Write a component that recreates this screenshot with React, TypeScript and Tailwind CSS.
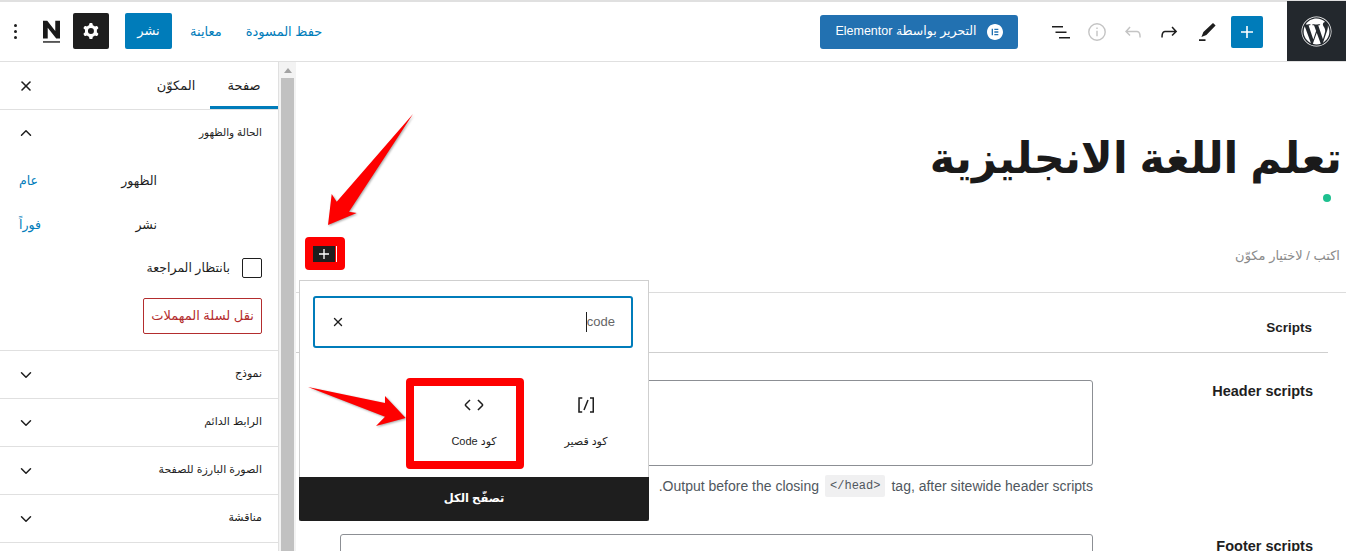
import { ChevronDown, ChevronUp, X } from 'lucide-react';
import { FaWordpress } from 'react-icons/fa';
import { SiElementor } from 'react-icons/si';

const panels = ['نموذج', 'الرابط الدائم', 'الصورة البارزة للصفحة', 'مناقشة'];

function Glyph({ d, className }: { d: string; className?: string }) {
  return (
    <svg viewBox="0 0 24 24" fill="currentColor" fillRule="evenodd" className={className}>
      <path d={d} />
    </svg>
  );
}

const plus = 'M18 11.2h-5.2V6h-1.6v5.2H6v1.6h5.2V18h1.6v-5.2H18z';
const undo =
  'M18.3 11.7c-.6-.6-1.4-.9-2.3-.9H6.7l2.9-3.3-1.1-1-4.5 5L8.5 16l1-1-2.7-2.7H16c.5 0 .9.2 1.3.5 1 1 1 3.4 1 4.5v.3h1.5v-.2c0-1.5 0-4.3-1.5-5.7z';
const redo =
  'M15.6 6.5l-1.1 1 2.9 3.3H8c-.9 0-1.7.3-2.3.9-1.4 1.5-1.4 4.2-1.4 5.6v.2h1.5v-.3c0-1.1 0-3.5 1-4.5.3-.3.7-.5 1.3-.5h9.2L14.5 15l1.1 1.1 4.6-4.6-4.6-5z';
const cog =
  'M10.289 4.836A1 1 0 0111.275 4h1.306a1 1 0 01.987.836l.244 1.466c.787.26 1.503.679 2.108 1.218l1.393-.522a1 1 0 011.216.437l.653 1.13a1 1 0 01-.23 1.273l-1.148.944a6.025 6.025 0 010 2.435l1.149.946a1 1 0 01.23 1.272l-.653 1.13a1 1 0 01-1.216.437l-1.394-.522c-.605.54-1.32.958-2.108 1.218l-.244 1.466a1 1 0 01-.987.836h-1.306a1 1 0 01-.986-.836l-.244-1.466a5.995 5.995 0 01-2.108-1.218l-1.394.522a1 1 0 01-1.217-.436l-.653-1.131a1 1 0 01.23-1.272l1.149-.946a6.026 6.026 0 010-2.435l-1.148-.944a1 1 0 01-.23-1.272l.653-1.131a1 1 0 011.217-.437l1.393.522a5.994 5.994 0 012.108-1.218l.244-1.466zM14.929 12a3 3 0 11-6 0 3 3 0 016 0z';
const listView = 'M3 6h11v1.5H3V6zm3.5 5.5h11V13h-11v-1.5zM21 17H10v1.5h11V17z';
const code =
  'M20.8 10.7l-4.3-4.3-1.1 1.1 4.3 4.3c.1.1.1.3 0 .4l-4.3 4.3 1.1 1.1 4.3-4.3c.7-.8.7-1.9 0-2.6zM4.2 11.8l4.3-4.3-1-1-4.3 4.3c-.7.7-.7 1.8 0 2.5l4.3 4.3 1.1-1.1-4.3-4.3c-.2-.1-.2-.3-.1-.4z';
const shortcode =
  'M16 4.2v1.5h2.5v12.5H16v1.5h4V4.2h-4zM4.2 19.8h4v-1.5H5.8V5.8h2.5V4.2h-4l-.1 15.6zm5.1-3.1l1.4.6 4-10-1.4-.6-4 10z';

function Header() {
  return (
    <header className="flex h-[62px] items-center border-t-2 border-b border-[#e0e0e0] bg-white">
      {/* left group */}
      <div className="flex items-center">
        <div className="ml-[14px] flex w-[3px] flex-col gap-[3px]">
          <span className="h-[3px] w-[3px] rounded-full bg-[#1e1e1e]" />
          <span className="h-[3px] w-[3px] rounded-full bg-[#1e1e1e]" />
          <span className="h-[3px] w-[3px] rounded-full bg-[#1e1e1e]" />
        </div>
        <svg viewBox="0 0 18 24" className="ml-[26px] h-[24px] w-[17px] text-[#1a1a1a]" fill="currentColor">
          <path d="M0 0h4.5l8.5 11V0h5v19h-4L5 7.5V19H0z" />
          <rect y="21.5" width="18" height="2" fill="#555" />
        </svg>
        <button className="-mt-px ml-[13px] flex h-9 w-9 items-center justify-center rounded-[2px] bg-[#1e1e1e] text-white">
          <Glyph d={cog} className="h-6 w-6" />
        </button>
        <button className="-mt-px ml-4 h-9 w-[47px] rounded-[2px] bg-[#007cba] text-[13px] text-white">نشر</button>
        <span className="ml-[18px] text-[13px] text-[#007cba]">معاينة</span>
        <span className="ml-6 text-[13px] text-[#007cba]">حفظ المسودة</span>
      </div>

      {/* right group */}
      <div className="ml-auto flex items-center self-stretch">
        <button
          dir="rtl"
          className="flex h-[34px] w-[198px] items-center justify-center gap-[10px] rounded-[3px] bg-[#2271b1] text-[12.5px] font-medium text-white"
        >
          <SiElementor className="h-4 w-4" />
          <span>التحرير بواسطة Elementor</span>
        </button>
        <Glyph d={listView} className="ml-[31px] h-6 w-6 text-[#1e1e1e]" />
        <svg viewBox="0 0 24 24" className="ml-3 h-6 w-6 text-[#c4c4c4]" fill="none" stroke="currentColor" strokeWidth="1.4">
          <circle cx="12" cy="12" r="8.2" />
          <path d="M12 10.8v5.4M12 7.4v1.7" />
        </svg>
        <Glyph d={undo} className="ml-3 h-6 w-6 text-[#c4c4c4]" />
        <Glyph d={redo} className="ml-3 h-6 w-6 text-[#1e1e1e]" />
        <svg viewBox="0 0 24 24" className="ml-[13px] h-6 w-6 text-[#1e1e1e]" fill="currentColor">
          <path d="M19 3l2.6 2.5-9.2 9.6-5 2 2-5.1zM5 19.2h6.5v1.7H5z" />
        </svg>
        <button className="ml-[13px] flex h-8 w-8 items-center justify-center rounded-[2px] bg-[#007cba] text-white">
          <Glyph d={plus} className="h-6 w-6" />
        </button>
        <div className="-mt-px ml-6 flex w-[59px] items-center justify-center self-stretch bg-[#23282d] text-white">
          <FaWordpress className="h-[31px] w-[31px]" />
        </div>
      </div>
    </header>
  );
}

function Sidebar() {
  return (
    <aside className="w-[279px] shrink-0 border-r border-[#e0e0e0] bg-white" dir="rtl">
      <div className="flex h-[48px] items-stretch border-b border-[#e0e0e0] text-[13px] text-[#1e1e1e]">
        <div className="flex w-[68px] items-center justify-center border-b-[3px] border-[#007cba] pt-[3px]">صفحة</div>
        <div className="flex w-[68px] items-center justify-center">المكوّن</div>
        <div className="mr-auto flex items-center pl-[18px]">
          <X className="h-4 w-4" strokeWidth={2.4} />
        </div>
      </div>

      <section className="h-[241px] border-b border-[#e0e0e0] px-4">
        <div className="flex h-[46px] items-center justify-between text-[10.5px] text-[#1e1e1e]">
          <span>الحالة والظهور</span>
          <ChevronUp className="ml-px h-[18px] w-[18px]" strokeWidth={2} />
        </div>
        <div className="mt-[3px] flex h-[44px] items-center text-[12.5px] text-[#1e1e1e]">
          <span className="mr-[105px] w-[60px] shrink-0">الظهور</span>
          <span className="mr-auto ml-[3px] text-[#007cba]">عام</span>
        </div>
        <div className="flex h-[44px] items-center text-[12.5px] text-[#1e1e1e]">
          <span className="mr-[105px] w-[60px] shrink-0">نشر</span>
          <span className="mr-auto ml-[3px] text-[#007cba]">فوراً</span>
        </div>
        <label className="mt-[11px] flex items-center text-[12.5px] text-[#1e1e1e]">
          <span className="h-5 w-5 rounded-[2px] border border-[#1e1e1e]" />
          <span className="mr-3">بانتظار المراجعة</span>
        </label>
        <button className="mt-5 h-[36px] w-[119px] rounded-[2px] border border-[#b32d2e] text-[13px] text-[#b32d2e]">
          نقل لسلة المهملات
        </button>
      </section>

      {panels.map((title) => (
        <div key={title} className="flex h-[48px] items-center justify-between border-b border-[#e0e0e0] px-4 text-[11px] text-[#1e1e1e]">
          <span className="-mt-[2px]">{title}</span>
          <ChevronDown className="mt-px ml-px h-[18px] w-[18px]" strokeWidth={2} />
        </div>
      ))}
    </aside>
  );
}

function Scrollbar() {
  return (
    <div className="flex w-[17px] shrink-0 flex-col items-center bg-[#f3f3f3]">
      <span className="mt-[6px] h-0 w-0 border-x-[4px] border-b-[5px] border-x-transparent border-b-[#a3a3a3]" />
      <div className="mt-[5px] w-[13px] flex-1 bg-[#c1c1c1]" />
    </div>
  );
}

function Editor() {
  return (
    <main className="min-w-0 flex-1 bg-white">
      <div dir="rtl" className="h-[230px] pr-[6px]">
        <h1 className="-mr-[2px] pt-[66px] text-[43px] leading-[60px] font-bold text-[#1a1a1a]">تعلم اللغة الانجليزية</h1>
        <span className="mt-[6px] mr-[9px] block h-2 w-2 rounded-full bg-[#1ec08f]" />
        <p className="mt-[44px] text-[13px] leading-5 text-[#8a8a8a]">اكتب / لاختيار مكوّن</p>
      </div>
      <div className="border-t border-[#dcdcdc]">
        <div className="mr-[18px] flex h-[60px] justify-end border-b border-[#cfcfcf] pt-[25px] pr-4 text-[13.5px] font-bold text-[#1e1e1e]">
          Scripts
        </div>
        <div className="flex pr-[33px] pl-[44px]">
          <div className="flex-1">
            <div className="mt-[27px] h-[86px] rounded-[3px] border border-[#8c8f94]" />
            <p className="mt-[10px] flex h-5 items-center justify-end text-[14px] whitespace-nowrap text-[#50575e]">
              .Output before the closing
              <code className="mx-[6px] rounded-[2px] bg-[#f0f0f1] px-[5px] py-[2px] font-['Liberation_Mono',monospace] text-[12px]">&lt;/head&gt;</code>
              tag, after sitewide header scripts
            </p>
            <div className="mt-[38px] h-[85px] rounded-[3px] border border-[#8c8f94]" />
          </div>
          <div className="w-[220px] text-right text-[14.5px] font-bold text-[#1e1e1e]">
            <div className="mt-[28px]">Header scripts</div>
            <div className="mt-[133px]">Footer scripts</div>
          </div>
        </div>
      </div>
    </main>
  );
}

function Inserter() {
  return (
    <div className="absolute top-[280px] left-[299px] z-10 flex h-[241px] w-[350px] flex-col border border-b-0 border-[#cfcfcf] bg-white">
      <div className="mt-[15px] mr-[15px] ml-[13px] flex h-[52px] items-center justify-between rounded-[3px] border-2 border-[#007cba] px-4">
        <X className="h-[14px] w-[14px] text-[#1e1e1e]" strokeWidth={2.4} />
        <span className="border-l border-[#1e1e1e] text-[13px] leading-5 text-[#666666]">code</span>
      </div>
      <div className="flex flex-1 justify-end pr-[12px]">
        <div className="mt-[45px] mr-[11px] flex w-[102px] flex-col items-center text-[11px] text-[#1e1e1e]">
          <Glyph d={code} className="h-6 w-6" />
          <span className="mt-[16px]" dir="rtl">كود Code</span>
        </div>
        <div className="mt-[45px] flex w-[100px] flex-col items-center text-[11px] text-[#1e1e1e]">
          <Glyph d={shortcode} className="h-6 w-6" />
          <span className="mt-[16px]" dir="rtl">كود قصير</span>
        </div>
      </div>
      <button className="-mx-px h-[44px] rounded-b-[2px] bg-[#1e1e1e] text-[11.5px] font-bold text-white">تصفّح الكل</button>
    </div>
  );
}

export default function App() {
  return (
    <div className="relative h-[551px] overflow-hidden bg-white font-['Liberation_Sans','DejaVu_Sans',sans-serif]">
      <Header />
      <div className="flex h-[489px]">
        <Sidebar />
        <Scrollbar />
        <Editor />
      </div>

      {/* block appender, marked up in red */}
      <div className="absolute top-[237px] left-[305px] z-10 flex h-[33px] w-[40px] items-center rounded-[4px] bg-[#fe0000] pl-[8px]">
        <span className="flex h-4 w-[22px] items-center justify-center bg-[#1e1e1e] text-white">
          <Glyph d={plus} className="h-5 w-5" />
        </span>
        <span className="ml-[1px] h-4 w-px bg-white" />
      </div>

      <Inserter />

      {/* annotation box around the Code block */}
      <div className="absolute top-[378px] left-[406px] z-20 h-[91px] w-[118px] rounded-[4px] border-[8px] border-[#fe0000]" />

      {/* annotation arrows */}
      <svg className="absolute top-[105px] left-[320px] z-20 h-[130px] w-[100px] drop-shadow-[1px_1px_1px_rgba(0,0,0,0.35)]" viewBox="320 105 100 130">
        <path d="M413 114L349 211.7L356.7 213L328 225L331.7 194L336.7 201.7Z" fill="#fe0000" />
      </svg>
      <svg className="absolute top-[380px] left-[300px] z-20 h-[55px] w-[110px] drop-shadow-[1px_1px_1px_rgba(0,0,0,0.35)]" viewBox="300 380 110 55">
        <path d="M308 387L385 403L385 396L405.7 418L376 426L385 416.7Z" fill="#fe0000" />
      </svg>
    </div>
  );
}
